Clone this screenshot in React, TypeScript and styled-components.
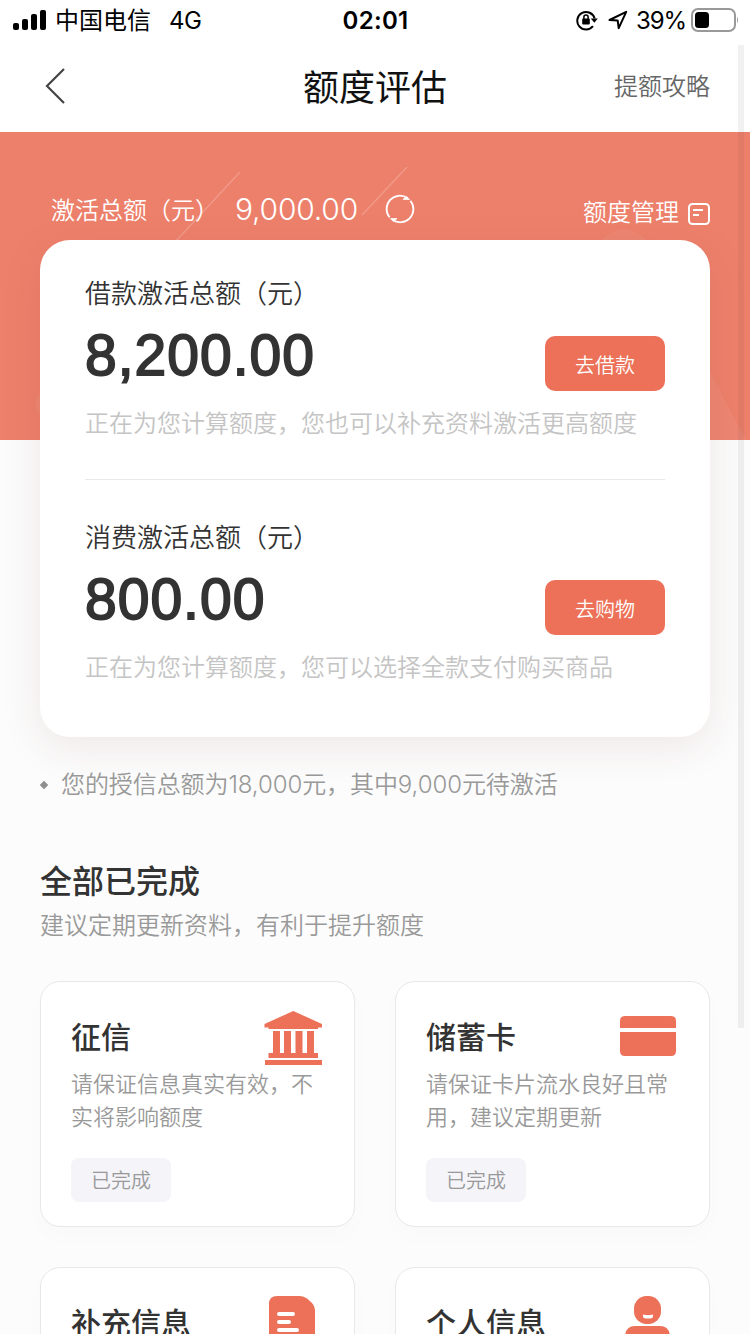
import React from 'react';
import styled, { createGlobalStyle } from 'styled-components';

const GlobalStyle = createGlobalStyle`
  * { box-sizing: border-box; }
  body {
    margin: 0;
    font-family: Inter, "Noto Sans CJK SC", sans-serif;
    font-weight: 350;
    color: #333;
  }
  h1, h2, h3, p { margin: 0; font-weight: inherit; }
  button { font: inherit; border: 0; padding: 0; }
  svg { display: block; flex: none; }
`;

const coral = '#ec7158';

const Page = styled.div`
  position: relative;
  width: 750px;
  height: 1334px;
  overflow: hidden;
  background: #fcfcfc;
`;

const StatusBar = styled.header`
  display: flex;
  justify-content: space-between;
  height: 40px;
  padding: 0 11px 0 12px;
  background: #fff;
  color: #000;
  font-size: 24px;
  line-height: 40px;
  font-weight: 400;
`;

const StatusGroup = styled.div<{ $end?: boolean }>`
  display: flex;
  flex: 1;
  align-items: center;
  justify-content: ${p => (p.$end ? 'flex-end' : 'flex-start')};
`;

const Carrier = styled.span`
  margin: 0 18px 0 9px;
  padding-top: 2px;
`;

const Network = styled.span`
  padding-top: 2px;
  letter-spacing: -0.4px;
`;

const Clock = styled.time`
  padding-top: 1px;
  font-weight: 600;
  letter-spacing: 0.3px;
`;

const Percent = styled.span`
  margin: 0 5px 0 8px;
  padding-top: 2px;
  letter-spacing: -1.1px;
`;

const IconGap = styled.span`
  width: 10px;
`;

const NavBar = styled.nav`
  display: flex;
  align-items: center;
  height: 92px;
  padding: 0 40px 0 44px;
  background: #fff;
`;

const NavSide = styled.div<{ $end?: boolean }>`
  display: flex;
  flex: 1;
  justify-content: ${p => (p.$end ? 'flex-end' : 'flex-start')};
  padding-top: ${p => (p.$end ? 2 : 0)}px;
  font-size: 24px;
  line-height: 36px;
  color: #666;
`;

const NavTitle = styled.h1`
  padding: 3px 4px 0 0;
  font-size: 36px;
  line-height: 52px;
  font-weight: 400;
  color: #111;
`;

const Banner = styled.section`
  position: relative;
  height: 308px;
  background: #ed806b;
  color: #fff;
`;

const BannerArt = styled.svg`
  position: absolute;
  inset: 0;
`;

const BannerRow = styled.div`
  position: relative;
  display: flex;
  align-items: flex-start;
  padding: 57px 40px 0 51px;
  font-size: 24px;
  line-height: 40px;
`;

const BannerLabel = styled.span`
  padding-top: 2px;
`;

const BannerAmount = styled.span`
  margin: 0 27px 0 16px;
  font-size: 30px;
  font-weight: 300;
  letter-spacing: -0.2px;
`;

const RefreshBox = styled.span`
  padding-top: 5px;
`;

const ManageLink = styled.span`
  display: flex;
  align-items: center;
  gap: 9px;
  margin-left: auto;
  padding-top: 4px;
`;

const NoteBox = styled.span`
  padding-top: 2px;
`;

const AmountCard = styled.section`
  position: relative;
  height: 497px;
  margin: -200px 40px 0;
  padding: 0 45px;
  border-radius: 30px;
  background: #fff;
  box-shadow: 0 10px 40px rgba(110, 50, 35, 0.1);
`;

const AmountBlock = styled.div<{ $divided?: boolean }>`
  height: ${p => (p.$divided ? 240 : 257)}px;
  padding-top: ${p => (p.$divided ? 34 : 38)}px;
  border-bottom: ${p => (p.$divided ? '1px solid #e8e8e8' : '0')};
`;

const AmountLabel = styled.h3`
  font-size: 26px;
  line-height: 40px;
`;

const AmountRow = styled.div`
  display: flex;
  justify-content: space-between;
  height: 82px;
`;

const Amount = styled.strong`
  font-family: "Liberation Sans", Arial, sans-serif;
  font-size: 57px;
  line-height: 82px;
  font-weight: 400;
  letter-spacing: 1px;
  -webkit-text-stroke: 1.8px #333;
`;

const ActionButton = styled.button`
  width: 120px;
  height: 55px;
  margin-top: 22px;
  padding-top: 1px;
  border-radius: 10px;
  background: ${coral};
  color: #fff;
  font-size: 20px;
`;

const AmountHint = styled.p`
  padding-top: 8px;
  font-size: 24px;
  line-height: 40px;
  color: #c4c4c4;
`;

const Notice = styled.p`
  display: flex;
  align-items: center;
  gap: 14px;
  padding: 28px 40px 0;
  font-size: 24px;
  line-height: 40px;
  letter-spacing: -0.08px;
  color: #999;
`;

const Diamond = styled.i`
  width: 6px;
  height: 6px;
  margin-left: 1px;
  background: #8f8f8f;
  transform: rotate(45deg);
`;

const SectionHead = styled.header`
  padding: 54px 40px 0;
`;

const SectionTitle = styled.h2`
  font-size: 32px;
  line-height: 46px;
  font-weight: 500;
`;

const SectionNote = styled.p`
  padding-top: 1px;
  font-size: 24px;
  line-height: 40px;
  color: #999;
`;

const Grid = styled.section`
  display: grid;
  grid-template-columns: 315px 315px;
  gap: 40px;
  padding: 35px 40px 0;
`;

const Tile = styled.article`
  height: 246px;
  padding: 28px 31px 0 30px;
  border: 1px solid #e8e8e8;
  border-radius: 20px;
  background: #fff;
  box-shadow: 0 10px 24px rgba(0, 0, 0, 0.015);
`;

const TileHead = styled.div`
  display: flex;
  justify-content: space-between;
  height: 58px;
`;

const TileTitle = styled.h3`
  padding-top: 1px;
  font-size: 30px;
  line-height: 52px;
  font-weight: 500;
`;

const TileText = styled.p`
  width: 253px;
  font-size: 22px;
  line-height: 33px;
  color: #999;
`;

const Tag = styled.span`
  display: block;
  width: 100px;
  height: 44px;
  margin-top: 24px;
  padding-top: 2px;
  border-radius: 8px;
  background: #f4f4f9;
  color: #999;
  font-size: 20px;
  line-height: 43px;
  text-align: center;
`;

const ScrollThumb = styled.div`
  position: absolute;
  top: 45px;
  right: 6px;
  width: 6px;
  height: 983px;
  border-radius: 1px;
  background: rgba(70, 50, 60, 0.07);
`;

const SignalIcon = () => (
  <svg width="34" height="22" viewBox="0 0 34 22">
    <rect x="1" y="14" width="6" height="7" rx="2" />
    <rect x="10" y="10" width="6" height="11" rx="2" />
    <rect x="19" y="5" width="6" height="16" rx="2" />
    <rect x="28" y="1" width="6" height="20" rx="2" />
  </svg>
);

const RotationLockIcon = () => (
  <svg width="22" height="22" viewBox="0 0 22 22" fill="none" stroke="#000" strokeWidth="2">
    <path d="M17 17.200A8.800 8.800 0 1 1 18.600 9.500" />
    <path d="M14.800 9.500h7l-3.500 4.300z" fill="#000" stroke="none" />
    <rect x="6.200" y="9.600" width="7.600" height="6" rx="1" fill="#000" stroke="none" />
    <path d="M7.900 10V8.100a2.100 2.100 0 0 1 4.200 0V10" strokeWidth="1.500" />
  </svg>
);

const LocationIcon = () => (
  <svg width="20" height="20" viewBox="0 0 20 20" fill="none" stroke="#000" strokeWidth="2" strokeLinejoin="round">
    <path d="M1.500 10 18.200 1.800 10.700 18.200 9.700 10.600z" />
  </svg>
);

const BatteryIcon = () => (
  <svg width="48" height="24" viewBox="0 0 48 24">
    <rect x="1" y="1" width="43" height="22" rx="6" fill="none" stroke="#999" strokeWidth="2" />
    <rect x="4" y="4" width="14" height="16" rx="3.500" />
    <path d="M46 8.500q2 3.500 0 7z" fill="#999" />
  </svg>
);

const BackIcon = () => (
  <svg width="22" height="36" viewBox="0 0 22 36" fill="none" stroke="#444" strokeWidth="2.200">
    <path d="M20 1 3 18l17 17" />
  </svg>
);

const RefreshIcon = () => (
  <svg width="30" height="30" viewBox="0 0 30 30" fill="none" stroke="#fff" strokeWidth="1.800">
    <path d="M4.600 23.300A13.200 13.200 0 0 1 22.500 4.200M25.400 6.700A13.200 13.200 0 0 1 7.500 25.800" />
    <path d="M18 5.400h6.500L21.700 2.600zM12 24.600H5.500l2.800 2.800z" fill="#fff" strokeWidth="0.800" />
  </svg>
);

const NoteIcon = () => (
  <svg width="22" height="22" viewBox="0 0 22 22" fill="none" stroke="#fff" strokeWidth="2">
    <rect x="1" y="1" width="20" height="20" rx="3.500" />
    <path d="M5 7h10M5 12h6" />
  </svg>
);

const BankIcon = () => (
  <svg width="60" height="56" viewBox="0 0 60 56" fill={coral}>
    <path d="M30.300 1 59 14v3.500h-4V19H5.500v-1.500h-4V14z" />
    <path d="M10 21h7v22.500h-7zM21 21h7v22.500h-7zM32.500 21h7v22.500h-7zM44 21h7v22.500h-7z" />
    <path d="M5.500 43h49.500v5H5.500zM2 50h57v5H2z" />
  </svg>
);

const CardIcon = () => (
  <svg width="60" height="56" viewBox="0 0 60 56" fill={coral}>
    <path d="M2 18v-7q0-5 5-5h46q5 0 5 5v7zM2 22h56v19q0 5-5 5H7q-5 0-5-5z" />
  </svg>
);

const FormIcon = () => (
  <svg width="60" height="56" viewBox="0 0 60 56">
    <path d="M6 8q0-8 8-8h23q4 0 7 2.500l5 4.500q3 3 3 7v42H6z" fill={coral} />
    <path d="M16 18h14M16 26h10M16 34h18" stroke="#fff" strokeWidth="4" strokeLinecap="round" />
  </svg>
);

const PersonIcon = () => (
  <svg width="60" height="56" viewBox="0 0 60 56" fill={coral}>
    <rect x="16" y="0" width="27" height="28" rx="12.500" />
    <path d="M25 18.500q5 1 10 0v1.500q0 2.500-3 2.500h-4q-3 0-3-2.500z" fill="#fff" />
    <path d="M7 42q0-12 10-12h25q10 0 10 12v14H7z" />
  </svg>
);

const tiles = [
  { title: '征信', text: '请保证信息真实有效，不实将影响额度', tag: '已完成', icon: <BankIcon /> },
  { title: '储蓄卡', text: '请保证卡片流水良好且常用，建议定期更新', tag: '已完成', icon: <CardIcon /> },
  { title: '补充信息', icon: <FormIcon /> },
  { title: '个人信息', icon: <PersonIcon /> },
];

export default function App() {
  return (
    <Page>
      <GlobalStyle />
      <StatusBar>
        <StatusGroup>
          <SignalIcon />
          <Carrier>中国电信</Carrier>
          <Network>4G</Network>
        </StatusGroup>
        <Clock>02:01</Clock>
        <StatusGroup $end>
          <RotationLockIcon />
          <IconGap />
          <LocationIcon />
          <Percent>39%</Percent>
          <BatteryIcon />
        </StatusGroup>
      </StatusBar>
      <NavBar>
        <NavSide><BackIcon /></NavSide>
        <NavTitle>额度评估</NavTitle>
        <NavSide $end>提额攻略</NavSide>
      </NavBar>
      <Banner>
        <BannerArt width="750" height="308" viewBox="0 0 750 308">
          <path d="m176 109 64-69M362 83l45-48" stroke="#fff" strokeOpacity="0.200" strokeWidth="1.500" />
          <path d="M602 108q22-22 44 0z" fill="#fff" fillOpacity="0.050" />
          <path d="m710 240 36 68h-36z" fill="#fff" fillOpacity="0.050" />
          <circle cx="52" cy="272" r="16" fill="#fff" fillOpacity="0.060" />
        </BannerArt>
        <BannerRow>
          <BannerLabel>激活总额（元）</BannerLabel>
          <BannerAmount>9,000.00</BannerAmount>
          <RefreshBox><RefreshIcon /></RefreshBox>
          <ManageLink>额度管理<NoteBox><NoteIcon /></NoteBox></ManageLink>
        </BannerRow>
      </Banner>
      <AmountCard>
        <AmountBlock $divided>
          <AmountLabel>借款激活总额（元）</AmountLabel>
          <AmountRow>
            <Amount>8,200.00</Amount>
            <ActionButton>去借款</ActionButton>
          </AmountRow>
          <AmountHint>正在为您计算额度，您也可以补充资料激活更高额度</AmountHint>
        </AmountBlock>
        <AmountBlock>
          <AmountLabel>消费激活总额（元）</AmountLabel>
          <AmountRow>
            <Amount>800.00</Amount>
            <ActionButton>去购物</ActionButton>
          </AmountRow>
          <AmountHint>正在为您计算额度，您可以选择全款支付购买商品</AmountHint>
        </AmountBlock>
      </AmountCard>
      <Notice><Diamond />您的授信总额为18,000元，其中9,000元待激活</Notice>
      <SectionHead>
        <SectionTitle>全部已完成</SectionTitle>
        <SectionNote>建议定期更新资料，有利于提升额度</SectionNote>
      </SectionHead>
      <Grid>
        {tiles.map(t => (
          <Tile key={t.title}>
            <TileHead>
              <TileTitle>{t.title}</TileTitle>
              {t.icon}
            </TileHead>
            {t.text && <TileText>{t.text}</TileText>}
            {t.tag && <Tag>{t.tag}</Tag>}
          </Tile>
        ))}
      </Grid>
      <ScrollThumb />
    </Page>
  );
}
